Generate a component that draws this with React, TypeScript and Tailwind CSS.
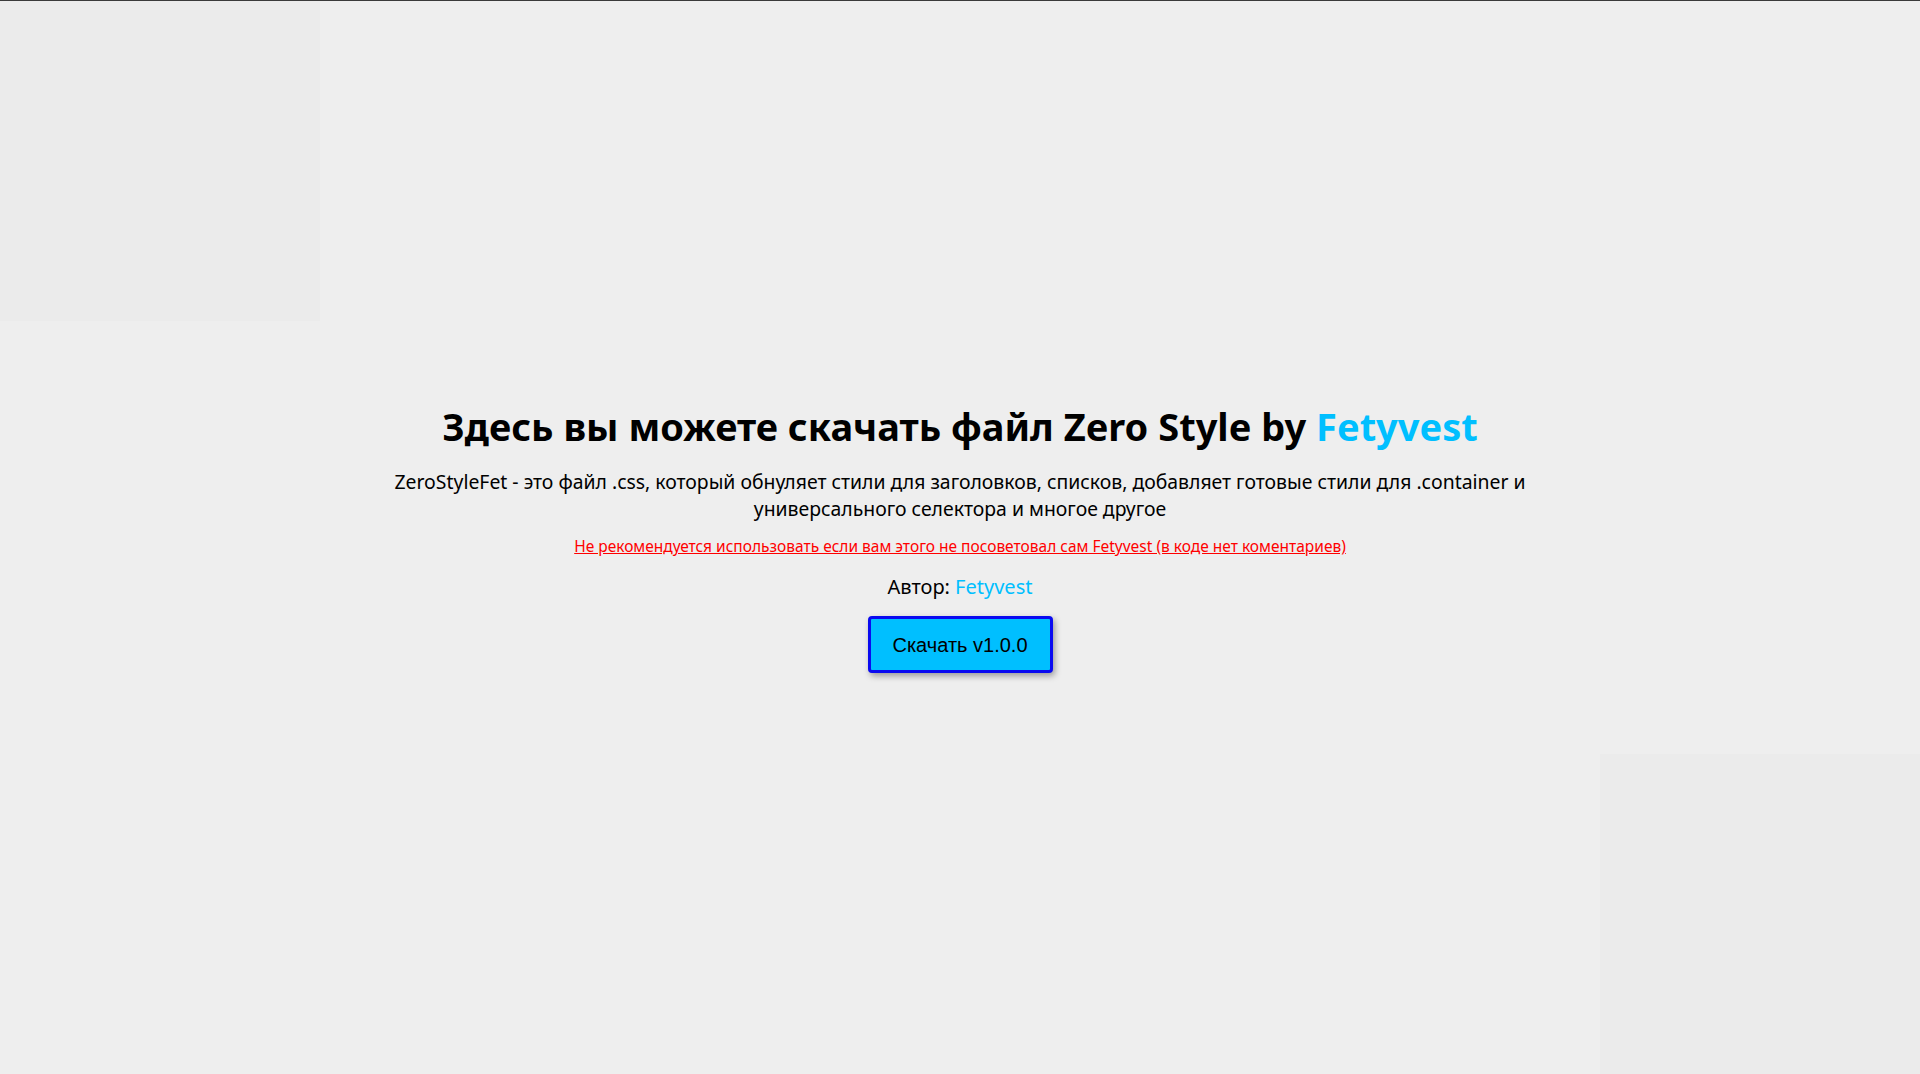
export default function App() {
  return (
    <div className="relative min-h-screen w-full overflow-hidden bg-[#eeeeee] border-t border-[#3a3a3a]" style={{ fontFamily: '"Noto Sans", "Open Sans", sans-serif' }}>
      <div className="absolute left-0 top-0 h-[320px] w-[320px] bg-[#ebebeb]" />
      <div className="absolute right-0 bottom-0 h-[320px] w-[320px] bg-[#ebebeb]" />
      <div className="relative flex min-h-[1073px] flex-col items-center justify-center text-center text-black">
        <h1 className="text-[38px] font-bold leading-[1.3]">
          Здесь вы можете скачать файл Zero Style by <span className="text-[#00bfff]">Fetyvest</span>
        </h1>
        <p className="mt-[17px] text-[19.4px] leading-[27px]">
          ZeroStyleFet - это файл .css, который обнуляет стили для заголовков, списков, добавляет готовые стили для .container и
          <br />
          универсального селектора и многое другое
        </p>
        <a href="#" className="mt-[14px] text-[15.5px] leading-[20px] text-[#ff0000] underline">
          Не рекомендуется использовать если вам этого не посоветовал сам Fetyvest (в коде нет коментариев)
        </a>
        <p className="mt-[17px] text-[20px] leading-[27px]">
          Автор: <span className="text-[#00bfff]">Fetyvest</span>
        </p>
        <button
          className="mt-[16px] h-[57px] w-[185px] rounded-[4px] border-[3px] border-[#0a0af0] bg-[#00bfff] text-[20px] text-black shadow-[2px_3px_6px_rgba(0,0,0,0.35)]"
          style={{ fontFamily: '"Liberation Sans", Arial, sans-serif' }}
        >
          Скачать v1.0.0
        </button>
      </div>
    </div>
  );
}
